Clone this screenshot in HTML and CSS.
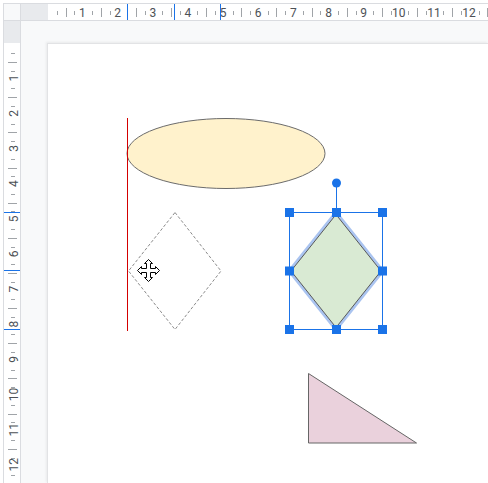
FILE: index.html
```html
<!DOCTYPE html>
<html>
<head>
<meta charset="utf-8">
<link rel="stylesheet" href="styles.css">
</head>
<body>
<div class="app">
  <div class="frame">
    <div class="corner"></div>
    <div class="ruler ruler-h">
      <svg width="467" height="16" viewBox="21 4 467 16" class="ruler-svg">
        <rect x="21" y="4" width="27" height="16" class="margin"/>
        <path class="tick" d="M57.5 11v4M74.5 11v4M92.5 11v4M110.5 11v4M127.5 11v4M145.5 11v4M162.5 11v4M180.5 11v4M197.5 11v4M215.5 11v4M233.5 11v4M250.5 11v4M268.5 11v4M285.5 11v4M303.5 11v4M320.5 11v4M338.5 11v4M356.5 11v4M373.5 11v4M391.5 11v4M408.5 11v4M426.5 11v4M443.5 11v4M461.5 11v4M479.5 11v4"/>
        <path class="tick" d="M66.5 8v9M101.5 8v9M136.5 8v9M171.5 8v9M206.5 8v9M241.5 8v9M276.5 8v9M312.5 8v9M347.5 8v9M382.5 8v9M417.5 8v9M452.5 8v9M487.5 8v9"/>
        <g class="num">
          <text x="82.45" y="16.6">1</text>
          <text x="117.6" y="16.6">2</text>
          <text x="152.75" y="16.6">3</text>
          <text x="187.9" y="16.6">4</text>
          <text x="223.05" y="16.6">5</text>
          <text x="258.2" y="16.6">6</text>
          <text x="293.35" y="16.6">7</text>
          <text x="328.5" y="16.6">8</text>
          <text x="363.65" y="16.6">9</text>
          <text x="398.8" y="16.6">10</text>
          <text x="433.95" y="16.6">11</text>
          <text x="469.1" y="16.6">12</text>
        </g>
        <path class="marker" d="M127.5 4v16M174.5 4v16M220.5 4v16"/>
      </svg>
    </div>
    <div class="ruler ruler-v">
      <svg width="16" height="462" viewBox="4 21 16 462" class="ruler-svg">
        <rect x="4" y="21" width="16" height="22" class="margin"/>
        <path class="tick" d="M11 53.5h4M11 71.5h4M11 88.5h4M11 106.5h4M11 124.5h4M11 141.5h4M11 159.5h4M11 176.5h4M11 194.5h4M11 211.5h4M11 229.5h4M11 247.5h4M11 264.5h4M11 282.5h4M11 299.5h4M11 317.5h4M11 334.5h4M11 352.5h4M11 370.5h4M11 387.5h4M11 405.5h4M11 422.5h4M11 440.5h4M11 458.5h4M11 475.5h4"/>
        <path class="tick" d="M8 62.5h9M8 97.5h9M8 132.5h9M8 168.5h9M8 203.5h9M8 238.5h9M8 273.5h9M8 308.5h9M8 343.5h9M8 378.5h9M8 414.5h9M8 449.5h9"/>
        <g class="num">
          <text x="13.8" y="82.45" transform="rotate(-90 13.8 78.15)">1</text>
          <text x="13.8" y="117.6" transform="rotate(-90 13.8 113.3)">2</text>
          <text x="13.8" y="152.75" transform="rotate(-90 13.8 148.45)">3</text>
          <text x="13.8" y="187.9" transform="rotate(-90 13.8 183.6)">4</text>
          <text x="13.8" y="223.05" transform="rotate(-90 13.8 218.75)">5</text>
          <text x="13.8" y="258.2" transform="rotate(-90 13.8 253.9)">6</text>
          <text x="13.8" y="293.35" transform="rotate(-90 13.8 289.05)">7</text>
          <text x="13.8" y="328.5" transform="rotate(-90 13.8 324.2)">8</text>
          <text x="13.8" y="363.65" transform="rotate(-90 13.8 359.35)">9</text>
          <text x="13.8" y="398.8" transform="rotate(-90 13.8 394.5)">10</text>
          <text x="13.8" y="433.95" transform="rotate(-90 13.8 429.65)">11</text>
          <text x="13.8" y="469.1" transform="rotate(-90 13.8 464.8)">12</text>
        </g>
        <path class="marker" d="M4 212.5h16M4 270.5h16M4 329.5h16"/>
      </svg>
    </div>
    <div class="canvas">
      <div class="page"></div>
      <svg class="shapes" width="467" height="462" viewBox="21 21 467 462">
        <ellipse class="ellipse" cx="226" cy="153.5" rx="99" ry="35"/>
        <path class="guide" d="M127.5 118V331"/>
        <polygon class="ghost" points="175,212.5 221,271 175,329.5 128.5,271"/>
        <polygon class="glow" points="336,214.5 381,271 336,327.5 291,271"/>
        <polygon class="green" points="336,214.5 381,271 336,327.5 291,271"/>
        <polygon class="tri" points="308.5,373.5 308.5,443 416.5,443"/>
        <g class="sel">
          <rect class="sel-box" x="289.5" y="212.5" width="93" height="117"/>
          <path class="sel-box" d="M336.5 187V212"/>
          <circle class="handle" cx="336.5" cy="183" r="4.5"/>
          <rect class="handle" x="285" y="208" width="9" height="9"/>
          <rect class="handle" x="332" y="208" width="9" height="9"/>
          <rect class="handle" x="378" y="208" width="9" height="9"/>
          <rect class="handle" x="285" y="266.5" width="9" height="9"/>
          <rect class="handle" x="378" y="266.5" width="9" height="9"/>
          <rect class="handle" x="285" y="325" width="9" height="9"/>
          <rect class="handle" x="332" y="325" width="9" height="9"/>
          <rect class="handle" x="378" y="325" width="9" height="9"/>
        </g>
        <g transform="translate(148.5 270.5)">
          <polygon class="cursor" points="0,-11 4,-7 2,-7 2,-2 7,-2 7,-4 11,0 7,4 7,2 2,2 2,7 4,7 0,11 -4,7 -2,7 -2,2 -7,2 -7,4 -11,0 -7,-4 -7,-2 -2,-2 -2,-7 -4,-7"/>
        </g>
      </svg>
    </div>
  </div>
</div>
</body>
</html>
```
FILE: styles.css
```css
html, body {
  margin: 0;
  padding: 0;
  background: #fff;
}
.app {
  width: 488px;
  height: 483px;
  box-sizing: border-box;
  padding: 3px 0 0 3px;
  background: #fff;
  overflow: hidden;
  font-family: Roboto, "Liberation Sans", Arial, sans-serif;
}
.frame {
  height: 100%;
  box-sizing: border-box;
  border-top: 1px solid #dadce0;
  border-left: 1px solid #dadce0;
  display: grid;
  grid-template-columns: 17px 1fr;
  grid-template-rows: 17px 1fr;
}
.corner {
  background: #f8f9fa;
  border-right: 1px solid #dadce0;
  border-bottom: 1px solid #dadce0;
}
.ruler {
  background: #fff;
  overflow: hidden;
}
.ruler-h {
  border-bottom: 1px solid #dadce0;
}
.ruler-v {
  border-right: 1px solid #dadce0;
}
.ruler-svg {
  display: block;
}
.margin {
  fill: #e8eaed;
}
.tick {
  stroke: #a0a4a8;
  stroke-width: 1;
  fill: none;
  shape-rendering: crispEdges;
}
.num text {
  font-family: Roboto, "Liberation Sans", Arial, sans-serif;
  font-size: 12px;
  fill: #4d5156;
  text-anchor: middle;
}
.marker {
  stroke: #1a73e8;
  stroke-width: 1;
  shape-rendering: crispEdges;
}
.canvas {
  position: relative;
  background: #f8f9fa;
  overflow: hidden;
  display: flex;
  padding: 22px 0 0 26px;
}
.page {
  flex: 1;
  background: #fff;
  border-top: 1px solid #e2e3e5;
  border-left: 1px solid #e2e3e5;
  box-shadow: -1px -1px 2px rgba(60, 64, 67, 0.08);
}
.shapes {
  position: absolute;
  left: 0;
  top: 0;
}
.ellipse {
  fill: #fff2cc;
  stroke: #6b6b6b;
  stroke-width: 1;
}
.guide {
  stroke: #d40000;
  stroke-width: 1;
}
.ghost {
  fill: none;
  stroke: #8a8a8a;
  stroke-width: 1;
  stroke-dasharray: 3 2;
}
.glow {
  fill: none;
  stroke: #aac4f0;
  stroke-width: 6;
  stroke-linejoin: round;
}
.green {
  fill: #d9ead3;
  stroke: #5a5a5a;
  stroke-width: 1;
}
.tri {
  fill: #ead1dc;
  stroke: #666;
  stroke-width: 1;
}
.sel-box {
  fill: none;
  stroke: #1a73e8;
  stroke-width: 1;
}
.handle {
  fill: #1a73e8;
}
.cursor {
  fill: #fff;
  stroke: #000;
  stroke-width: 1;
  stroke-linejoin: miter;
}
```
